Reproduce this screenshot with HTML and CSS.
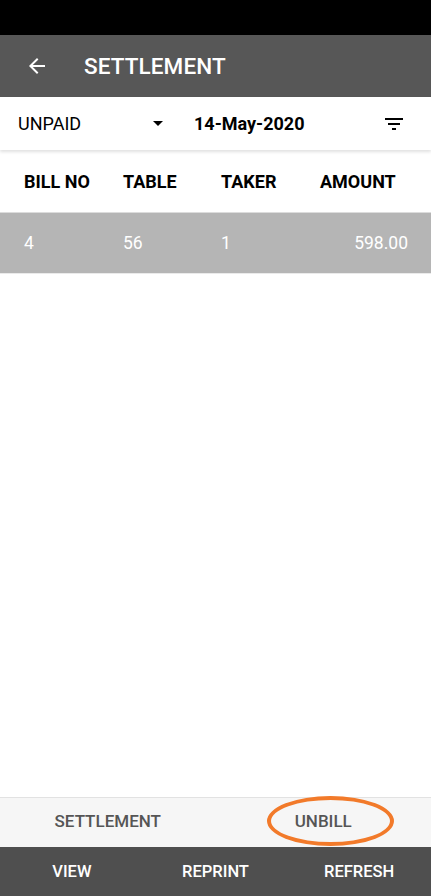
FILE: index.html
```html
<!DOCTYPE html>
<html lang="en">
<head>
    <meta charset="UTF-8">
    <meta name="viewport" content="width=device-width, initial-scale=1.0">
    <title>Settlement</title>
    <link rel="stylesheet" href="styles.css">
</head>
<body>
<div class="status-bar"></div>

<header class="app-bar">
    <svg class="back-icon" viewBox="0 0 24 24" width="24" height="24">
        <path d="M20 11H7.83l5.59-5.59L12 4l-8 8 8 8 1.41-1.41L7.83 13H20v-2z" fill="#fff"/>
    </svg>
    <h1>SETTLEMENT</h1>
</header>

<div class="filter-bar">
    <div class="status-select">
        <span>UNPAID</span>
        <svg class="caret" viewBox="0 0 10 5" width="10" height="5">
            <path d="M0 0h10L5 5z" fill="#000"/>
        </svg>
    </div>
    <div class="date">14-May-2020</div>
    <svg class="filter-icon" viewBox="0 0 18 12" width="18" height="12">
        <rect x="0" y="0" width="18" height="2" fill="#000"/>
        <rect x="3" y="5" width="12" height="2" fill="#000"/>
        <rect x="7" y="10" width="4" height="2" fill="#000"/>
    </svg>
</div>

<div class="table-head">
    <span>BILL NO</span>
    <span>TABLE</span>
    <span>TAKER</span>
    <span>AMOUNT</span>
</div>

<div class="table-row selected">
    <span>4</span>
    <span>56</span>
    <span>1</span>
    <span class="amount">598.00</span>
</div>

<div class="spacer"></div>

<nav class="tabs">
    <button class="tab">SETTLEMENT</button>
    <button class="tab highlighted">UNBILL</button>
</nav>

<nav class="actions">
    <button>VIEW</button>
    <button>REPRINT</button>
    <button>REFRESH</button>
</nav>
</body>
</html>
```

FILE: styles.css
```css
* {
    margin: 0;
    padding: 0;
    box-sizing: border-box;
}

body {
    font-family: Roboto, 'Liberation Sans', sans-serif;
    background-color: #fff;
    color: #000;
    height: 896px;
    display: flex;
    flex-direction: column;
    overflow: hidden;
}

.status-bar {
    height: 35px;
    background-color: #000;
}

.app-bar {
    height: 62px;
    background-color: #575757;
    display: flex;
    align-items: center;
    padding-left: 25px;
}

.back-icon {
    margin-right: 35px;
}

.app-bar h1 {
    color: #fff;
    font-size: 22.5px;
    font-weight: 500;
    letter-spacing: 0.1px;
}

.filter-bar {
    height: 53px;
    display: flex;
    align-items: center;
    padding: 0 28px 0 18px;
    box-shadow: 0 2px 3px rgba(0, 0, 0, 0.12);
    position: relative;
}

.status-select {
    width: 145px;
    display: flex;
    align-items: center;
    justify-content: space-between;
    font-size: 18px;
}

.date {
    margin-left: 31px;
    font-size: 18px;
    font-weight: 700;
    flex: 1;
}

.table-head,
.table-row {
    display: grid;
    grid-template-columns: 99px 98px 99px 1fr;
    align-items: center;
    padding: 0 23px 0 24px;
    font-size: 17.5px;
}

.table-head {
    height: 62px;
    font-size: 18px;
    font-weight: 700;
}

.table-row {
    height: 62px;
    border-top: 1px solid #dcdcdc;
    border-bottom: 1px solid #eaeaea;
}

.table-row.selected {
    background-color: #b5b5b5;
    color: #fff;
}

.amount {
    text-align: right;
}

.spacer {
    flex: 1;
}

.tabs {
    height: 50px;
    display: flex;
    background-color: #f6f6f6;
    border-top: 1px solid #e2e2e2;
}

.tabs .tab,
.actions button {
    flex: 1;
    border: none;
    background: none;
    font-family: inherit;
    cursor: pointer;
}

.tab {
    font-size: 17px;
    font-weight: 500;
    color: #555;
    position: relative;
    padding-bottom: 3px;
}

.tab.highlighted::after {
    content: '';
    box-sizing: border-box;
    position: absolute;
    left: 51px;
    top: -2px;
    width: 127px;
    height: 50px;
    border: 4px solid #f27a2a;
    border-radius: 50%;
}

.actions {
    height: 49px;
    display: flex;
    background-color: #4f4f4f;
}

.actions button {
    color: #fff;
    font-size: 16.5px;
    font-weight: 500;
}
```
